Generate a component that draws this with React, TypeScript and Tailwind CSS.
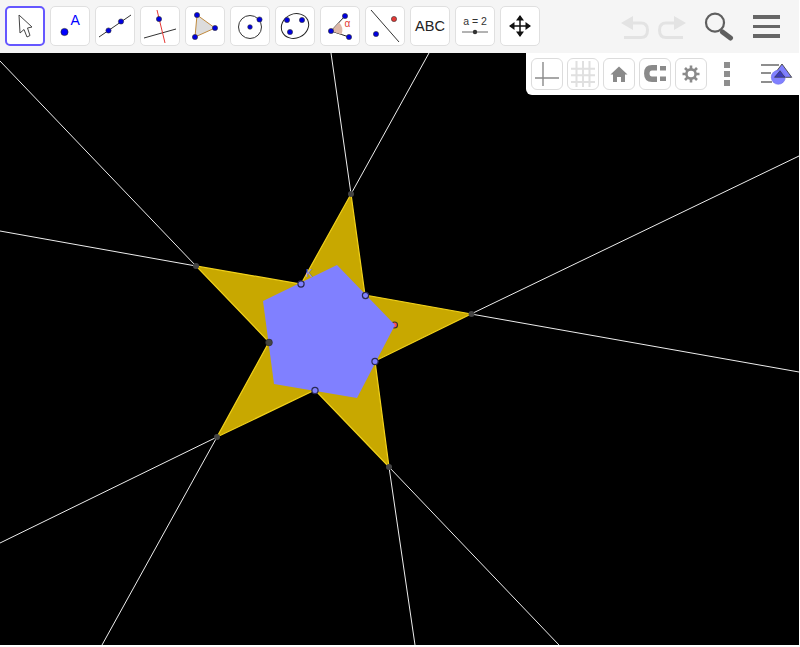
import type { ReactNode } from 'react';

const BLUE = '#0000ff';
const font = 'font-["Liberation_Sans",Arial,sans-serif]';

function Dot({ x, y, r = 2.6, fill = '#0000e0' }: { x: number; y: number; r?: number; fill?: string }) {
  return <circle cx={x} cy={y} r={r} fill={fill} stroke="#333" strokeWidth="0.6" />;
}

function ToolButton({ active, children }: { active?: boolean; children: ReactNode }) {
  return (
    <button
      className={`flex h-10 w-10 shrink-0 items-center justify-center rounded-[5px] bg-white ${
        active ? 'border-2 border-[#6557ff]' : 'border border-[#e0e0e0]'
      }`}
    >
      {children}
    </button>
  );
}

function Icon({ children }: { children: ReactNode }) {
  return (
    <svg width="38" height="38" viewBox="0 0 38 38" fill="none">
      {children}
    </svg>
  );
}

function Toolbar() {
  return (
    <div className="flex h-[53px] shrink-0 items-start bg-[#f5f5f5] pl-[5px] pt-[6px]">
      <div className="flex gap-[5px]">
        <ToolButton active>
          <svg width="36" height="36" viewBox="0 0 36 36" fill="none">
            <path d="M12 7 L13 25 L17 21.5 L20 29 L23 27.5 L20.5 20 L25 19 Z" fill="#fff" stroke="#444" strokeWidth="1" />
          </svg>
        </ToolButton>
        <ToolButton>
          <Icon>
            <circle cx="13.5" cy="25" r="3.6" fill={BLUE} stroke="#222" strokeWidth="0.6" />
            <text x="19.5" y="18" fontSize="14" fill={BLUE} fontFamily="Liberation Sans, Arial, sans-serif">A</text>
          </Icon>
        </ToolButton>
        <ToolButton>
          <Icon>
            <path d="M3 30 L35 8" stroke="#333" strokeWidth="1" />
            <Dot x={12.5} y={23.5} />
            <Dot x={25} y={14.5} />
          </Icon>
        </ToolButton>
        <ToolButton>
          <Icon>
            <path d="M3 31 L35 22" stroke="#333" strokeWidth="1" />
            <path d="M16 3 L24 36" stroke="#e53935" strokeWidth="1" />
            <Dot x={18} y={12} />
          </Icon>
        </ToolButton>
        <ToolButton>
          <Icon>
            <path d="M11 8 L29 21 L9 30 Z" fill="#dcdcdc" stroke="#c08a3e" strokeWidth="1" />
            <Dot x={11} y={8} />
            <Dot x={29} y={21} />
            <Dot x={9} y={30} />
          </Icon>
        </ToolButton>
        <ToolButton>
          <Icon>
            <circle cx="19" cy="20" r="11.5" stroke="#333" strokeWidth="1" />
            <Dot x={19} y={20} r={2.3} />
            <Dot x={28.5} y={12.5} />
          </Icon>
        </ToolButton>
        <ToolButton>
          <Icon>
            <ellipse cx="19" cy="19" rx="14" ry="12" transform="rotate(-25 19 19)" stroke="#222" strokeWidth="1" />
            <Dot x={11} y={13} />
            <Dot x={26} y={13} />
            <Dot x={14} y={25} />
          </Icon>
        </ToolButton>
        <ToolButton>
          <Icon>
            <path d="M24 9 L10 24 L28 30" stroke="#222" strokeWidth="1" />
            <path d="M10 24 L18 15.5 A 11 11 0 0 1 20.5 27.5 Z" fill="#ddb8a8" />
            <Dot x={24} y={9} />
            <Dot x={10} y={24} />
            <Dot x={28} y={30} />
            <text x="23.5" y="20" fontSize="10" fill="#e53935" fontFamily="Liberation Sans, Arial, sans-serif">α</text>
          </Icon>
        </ToolButton>
        <ToolButton>
          <Icon>
            <path d="M5 3 L33 35" stroke="#333" strokeWidth="1" />
            <circle cx="28" cy="12" r="2.6" fill="#e53935" stroke="#333" strokeWidth="0.6" />
            <Dot x={10} y={27} />
          </Icon>
        </ToolButton>
        <ToolButton>
          <span className={`${font} text-[14.5px] leading-none text-[#222]`}>ABC</span>
        </ToolButton>
        <ToolButton>
          <Icon>
            <text x="19" y="18" textAnchor="middle" fontSize="10.5" fill="#333" fontFamily="Liberation Sans, Arial, sans-serif">a = 2</text>
            <path d="M6 25 L32 25" stroke="#666" strokeWidth="1" />
            <circle cx="19" cy="25" r="2.2" fill="#333" />
          </Icon>
        </ToolButton>
        <ToolButton>
          <Icon>
            <path d="M19 9 L19 29 M9 19 L29 19" stroke="#111" strokeWidth="1.5" />
            <path d="M19 8 L15 13.5 L23 13.5 Z M19 30 L15 24.5 L23 24.5 Z M8 19 L13.5 15 L13.5 23 Z M30 19 L24.5 15 L24.5 23 Z" fill="#111" />
          </Icon>
        </ToolButton>
      </div>
      <div className="ml-auto flex items-start">
        <svg width="30" height="28" viewBox="0 0 30 28" fill="none" className="mt-[8px]">
          <path d="M13 2 L1 9 L13 16 Z" fill="#e3e3e3" />
          <path d="M12 9 H21 Q27.5 9 27.5 16 Q27.5 23.5 21 23.5 H4" stroke="#e3e3e3" strokeWidth="3" />
        </svg>
        <svg width="30" height="28" viewBox="0 0 30 28" fill="none" className="ml-[7px] mt-[8px]">
          <path d="M17 2 L29 9 L17 16 Z" fill="#e3e3e3" />
          <path d="M18 9 H9 Q2.5 9 2.5 16 Q2.5 23.5 9 23.5 H26" stroke="#e3e3e3" strokeWidth="3" />
        </svg>
        <svg width="34" height="32" viewBox="0 0 34 32" fill="none" className="ml-[15px] mt-[4px]">
          <circle cx="13" cy="12.7" r="9" stroke="#5f5f5f" strokeWidth="2.2" />
          <path d="M20.5 22 L28.5 28" stroke="#5f5f5f" strokeWidth="5" strokeLinecap="round" />
        </svg>
        <div className="ml-[17px] mr-[19.5px] mt-[9px] flex w-[26.5px] flex-col gap-[6px]">
          <div className="h-[3.5px] bg-[#666]" />
          <div className="h-[3.5px] bg-[#666]" />
          <div className="h-[3.5px] bg-[#666]" />
        </div>
      </div>
    </div>
  );
}

function StyleButton({ children }: { children: ReactNode }) {
  return (
    <button className="flex h-8 w-8 shrink-0 items-center justify-center rounded-[6px] border border-[#dcdcdc] bg-white">
      {children}
    </button>
  );
}

function StylePanel() {
  return (
    <div className="absolute right-0 top-0 flex h-[42px] w-[273px] items-start rounded-bl-[6px] bg-white pl-[5px] pt-[5px]">
      <div className="flex gap-1">
        <StyleButton>
          <svg width="30" height="30" viewBox="0 0 30 30" fill="none">
            <path d="M11 3 V27 M3 19 H27" stroke="#8a8a8a" strokeWidth="1.4" />
          </svg>
        </StyleButton>
        <StyleButton>
          <svg width="30" height="30" viewBox="0 0 30 30" fill="none">
            <path d="M8.5 2 V28 M15 2 V28 M21.5 2 V28 M3 9.7 H27 M3 16.3 H27 M3 23 H27" stroke="#e0e0e0" strokeWidth="2" />
          </svg>
        </StyleButton>
        <StyleButton>
          <svg width="20" height="20" viewBox="0 0 20 20">
            <path d="M10 2.5 L18.5 10.5 H16 V18 H12 V13 H8 V18 H4 V10.5 H1.5 Z" fill="#8a8a8a" />
          </svg>
        </StyleButton>
        <StyleButton>
          <svg width="26" height="26" viewBox="0 0 26 26" fill="none">
            <path d="M15 6.8 H10 Q4.8 6.8 4.8 12.5 Q4.8 18.2 10 18.2 H15" stroke="#8a8a8a" strokeWidth="5.5" />
            <path d="M18 5 H24 V9.5 H18 Z M18 15.5 H24 V20 H18 Z" fill="#8a8a8a" />
          </svg>
        </StyleButton>
        <StyleButton>
          <svg width="20" height="20" viewBox="0 0 20 20" fill="none">
            <circle cx="10" cy="10" r="4.6" stroke="#8a8a8a" strokeWidth="2.6" />
            <path
              d="M10 1.5 V5 M10 15 V18.5 M1.5 10 H5 M15 10 H18.5 M4 4 L6.5 6.5 M13.5 13.5 L16 16 M16 4 L13.5 6.5 M6.5 13.5 L4 16"
              stroke="#8a8a8a"
              strokeWidth="2.6"
            />
          </svg>
        </StyleButton>
      </div>
      <div className="ml-[17px] mt-[4px] flex w-[6px] flex-col gap-[3px]">
        <div className="h-[6px] bg-[#8e8e8e]" />
        <div className="h-[6px] bg-[#8e8e8e]" />
        <div className="h-[6px] bg-[#8e8e8e]" />
      </div>
      <svg width="32" height="26" viewBox="0 0 32 26" fill="none" className="ml-[31px] mt-[4px]">
        <path d="M0 3 H18 M0 11 H10 M0 20 H11" stroke="#8e8e8e" strokeWidth="2" />
        <path d="M21 2 L30.7 15.3 L11 15.3 Z" fill="#8080ff" stroke="#444" strokeWidth="0.9" />
        <circle cx="17.3" cy="15.3" r="7" fill="#8080ff" stroke="#7070e8" strokeWidth="0.6" />
        <path d="M19 8.8 L13.5 15.3 H24 Z" fill="#3b3bbd" stroke="#333" strokeWidth="0.6" />
      </svg>
    </div>
  );
}

const rays = [
  'M351 141 L331 0 M351 141 L429 0',
  'M471 261 L799 103 M471 261 L799 319',
  'M389 414 L415 592 M389 414 L559 592',
  'M217 384 L0 490 M217 384 L102 592',
  'M196 213 L0 8 M196 213 L0 178',
];

const hollow = [
  [301, 231],
  [365.5, 242.5],
  [375, 308.5],
  [315, 337.5],
];

const outer = [
  [351, 141],
  [471.5, 261],
  [389, 414],
  [217, 384],
  [196, 213],
];

function Construction() {
  return (
    <svg className="block h-full w-full" viewBox="0 0 799 592" fill="none">
      {rays.map((d) => (
        <path key={d} d={d} stroke="#ededed" strokeWidth="1" />
      ))}
      <path
        d="M351 141 L365 242 L471 261 L375 308 L389 414 L315 337 L217 384 L269 289 L196 213 L301 231 Z"
        fill="#c8a800"
        stroke="#f2d21a"
        strokeWidth="1.2"
      />
      <circle cx="394.5" cy="272" r="3" fill="#ff4d4d" stroke="#333" strokeWidth="1.2" />
      <path d="M337 212 L395 272 L357 345 L274 331 L263 248 Z" fill="#8080ff" />
      {outer.map(([x, y]) => (
        <circle key={`${x}-${y}`} cx={x} cy={y} r="3" fill="#444" />
      ))}
      <circle cx="269" cy="289.5" r="3.4" fill="#444" stroke="#2a2a2a" strokeWidth="0.6" />
      {hollow.map(([x, y]) => (
        <circle key={`${x}-${y}`} cx={x} cy={y} r="3.1" fill="#8080ff" stroke="#2a2a55" strokeWidth="1.2" />
      ))}
      <text x="306" y="224" fontSize="10" fill="#8080ff" fontFamily="Liberation Sans, Arial, sans-serif">K</text>
    </svg>
  );
}

export default function App() {
  return (
    <div className="h-[647px] w-[800px] overflow-hidden bg-white">
      <div className="flex h-[645px] w-[799px] flex-col">
        <Toolbar />
        <div className="relative min-h-0 flex-1 bg-black">
          <Construction />
          <StylePanel />
        </div>
      </div>
    </div>
  );
}
